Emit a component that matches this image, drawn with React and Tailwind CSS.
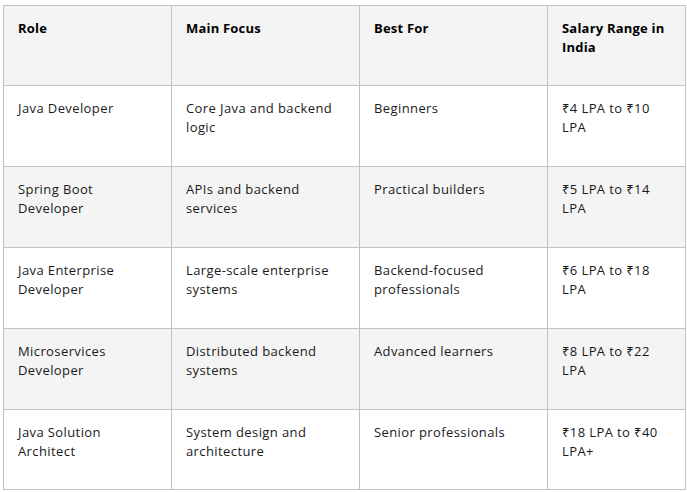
const rows = [
  [["Java Developer"], ["Core Java and backend", "logic"], ["Beginners"], ["₹4 LPA to ₹10", "LPA"]],
  [["Spring Boot", "Developer"], ["APIs and backend", "services"], ["Practical builders"], ["₹5 LPA to ₹14", "LPA"]],
  [["Java Enterprise", "Developer"], ["Large-scale enterprise", "systems"], ["Backend-focused", "professionals"], ["₹6 LPA to ₹18", "LPA"]],
  [["Microservices", "Developer"], ["Distributed backend", "systems"], ["Advanced learners"], ["₹8 LPA to ₹22", "LPA"]],
  [["Java Solution", "Architect"], ["System design and", "architecture"], ["Senior professionals"], ["₹18 LPA to ₹40", "LPA+"]],
];

const headers = [["Role"], ["Main Focus"], ["Best For"], ["Salary Range in", "India"]];

function Lines({ lines }) {
  return lines.map((l, i) => (
    <span key={i} className="block whitespace-nowrap">
      {l}
    </span>
  ));
}

export default function App() {
  return (
    <div
      className="w-[687px] h-[492px] bg-white pl-[3px] pt-[5px]"
      style={{ fontFamily: '"Open Sans", "Noto Sans", sans-serif' }}
    >
      <table className="table-fixed border-collapse w-[682px] text-[13px] leading-[19px] text-[#1a1a1a]">
        <colgroup>
          <col className="w-[168px]" />
          <col className="w-[188px]" />
          <col className="w-[188px]" />
          <col className="w-[138px]" />
        </colgroup>
        <thead>
          <tr className="bg-[#f4f4f4] h-[80px]">
            {headers.map((h, i) => (
              <th
                key={i}
                className="border border-[#c2c2c2] align-top text-left font-bold text-black tracking-[0.2px] px-[14px] pt-[13px]"
              >
                <Lines lines={h} />
              </th>
            ))}
          </tr>
        </thead>
        <tbody>
          {rows.map((r, ri) => (
            <tr key={ri} className={`${ri === 4 ? "h-[80px]" : "h-[81px]"} ${ri % 2 === 1 ? "bg-[#f4f4f4]" : "bg-white"}`}>
              {r.map((c, ci) => (
                <td key={ci} className="border border-[#c2c2c2] align-top tracking-[0.4px] px-[14px] pt-[13px]">
                  <Lines lines={c} />
                </td>
              ))}
            </tr>
          ))}
        </tbody>
      </table>
    </div>
  );
}
